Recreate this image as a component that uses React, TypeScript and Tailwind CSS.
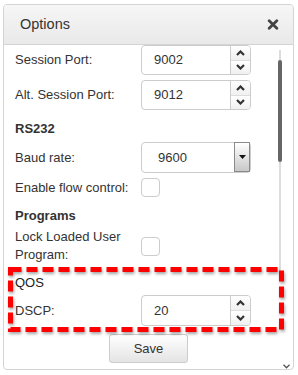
import React from "react";

const font = { fontFamily: '"Liberation Sans", Arial, sans-serif' };

function Chevron({ up }: { up?: boolean }) {
  return (
    <svg width="9" height="6" viewBox="0 0 9 6">
      <path
        d={up ? "M1 5 L4.5 1.5 L8 5" : "M1 1 L4.5 4.5 L8 1"}
        fill="none"
        stroke="#333"
        strokeWidth="2.2"
      />
    </svg>
  );
}

function NumberBox({ value, h = "h-[30px]" }: { value: string; h?: string }) {
  return (
    <div className={`flex ${h} w-[110px] rounded-[4px] border border-[#ccc] bg-white overflow-hidden`}>
      <div className="flex-1 flex items-center pl-[12px] text-[13px] text-[#333]">{value}</div>
      <div className="w-[20px] flex flex-col border-l border-[#ccc]">
        <div className="flex-1 flex items-center justify-center bg-gradient-to-b from-white to-[#f0f0f0]">
          <Chevron up />
        </div>
        <div className="flex-1 flex items-center justify-center border-t border-[#ddd] bg-gradient-to-b from-white to-[#f0f0f0]">
          <Chevron />
        </div>
      </div>
    </div>
  );
}

function Check() {
  return <div className="w-[19px] h-[19px] rounded-[4px] border border-[#ccc] bg-white" />;
}

function Row({ label, children, h }: { label: React.ReactNode; children: React.ReactNode; h: string }) {
  return (
    <div className={`flex items-center pl-[7px] ${h}`}>
      <div className="w-[126px] text-[13px] leading-[18px] text-[#333]">{label}</div>
      {children}
    </div>
  );
}

export default function App() {
  return (
    <div className="w-[298px] h-[375px] bg-white pt-[4px] px-[3px]" style={font}>
      <div className="w-[291px] h-[366px] border border-[#d4d4d4] rounded-[4px] flex flex-col overflow-hidden">
        {/* Header */}
        <div className="h-[40px] shrink-0 flex items-center justify-between pl-[16px] pr-[14px] border-b border-[#d4d4d4] bg-gradient-to-b from-[#f6f6f6] to-[#e9e9e9]">
          <span className="text-[14.5px] text-[#333]">Options</span>
          <svg width="12" height="11" viewBox="0 0 12 11">
            <path d="M2.2 1.8 L9.8 9.2 M9.8 1.8 L2.2 9.2" stroke="#444" strokeWidth="2.8" strokeLinecap="round" />
          </svg>
        </div>

        {/* Body */}
        <div className="relative flex-1 flex flex-col px-[4px] overflow-hidden">
          {/* scrollbar */}
          <div className="absolute left-[275px] top-[5px] w-[2px] h-[222px] bg-[#dcdcdc]" />
          <div className="absolute left-[274px] top-[15px] w-[4px] h-[102px] rounded-[2px] bg-[#666]" />
          <svg className="absolute left-[279px] top-[319px]" width="7" height="5" viewBox="0 0 7 5">
            <path d="M0.5 0.8 L3.5 3.8 L6.5 0.8" fill="none" stroke="#555" strokeWidth="1.3" />
          </svg>

          <Row label="Session Port:" h="h-[30px]">
            <NumberBox value="9002" />
          </Row>
          <div className="mt-[5px]">
            <Row label="Alt. Session Port:" h="h-[30px]">
              <NumberBox value="9012" />
            </Row>
          </div>

          <div className="mt-[9px] h-[20px] leading-[20px] pl-[7px] text-[13px] font-bold text-[#333]">RS232</div>

          <div className="mt-[3px]">
            <Row label="Baud rate:" h="h-[31px]">
              <div className="flex h-[31px] w-[110px] rounded-[4px] border border-[#ccc] bg-white">
                <div className="flex-1 flex items-center pl-[16px] text-[13px] text-[#333]">9600</div>
                <div className="w-[16px] h-[30px] -mt-[1px] flex items-center justify-center border border-[#8a8a8a] bg-gradient-to-b from-white to-[#c8c8c8]">
                  <svg width="7" height="4" viewBox="0 0 7 4">
                    <path d="M0 0 L7 0 L3.5 4 Z" fill="#111" />
                  </svg>
                </div>
              </div>
            </Row>
          </div>

          <div className="mt-[5px]">
            <Row label="Enable flow control:" h="h-[19px]">
              <Check />
            </Row>
          </div>

          <div className="mt-[9px] h-[20px] leading-[20px] pl-[7px] text-[13px] font-bold text-[#333]">Programs</div>

          <div className="mt-[2px]">
            <Row
              label={
                <>
                  Lock Loaded User
                  <br />
                  Program:
                </>
              }
              h="h-[36px]"
            >
              <Check />
            </Row>
          </div>

          {/* QOS highlighted */}
          <div className="relative mt-[3px] w-[276px] h-[65px] pl-[7px] pt-[6px]">
            <svg
              className="absolute inset-0"
              width="276"
              height="65"
              viewBox="0 0 276 65"
              style={{ filter: "drop-shadow(1px 2px 1.5px rgba(0,0,0,0.35))" }}
            >
              <rect x="2.5" y="2.5" width="271" height="60" fill="none" stroke="#ff0000" strokeWidth="5" strokeDasharray="11 5" />
            </svg>
            <div className="h-[20px] leading-[20px] text-[13px] text-[#222]">QOS</div>
            <div className="mt-[2px] flex items-center h-[31px]">
              <div className="w-[126px] text-[13px] text-[#333]">DSCP:</div>
              <NumberBox value="20" h="h-[31px]" />
            </div>
          </div>

          <div className="mt-[2px] flex justify-center">
            <button className="w-[79px] h-[29px] rounded-[3px] border border-[#ccc] bg-gradient-to-b from-white to-[#e4e4e4] text-[13px] text-[#333]">
              Save
            </button>
          </div>
        </div>
      </div>
    </div>
  );
}
